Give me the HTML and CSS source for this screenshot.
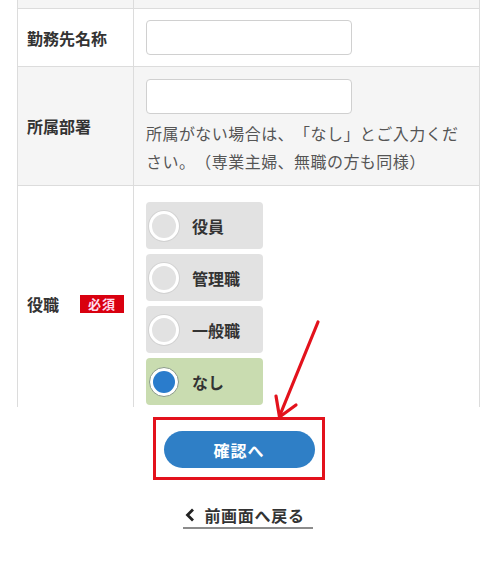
FILE: index.html
```html
<!DOCTYPE html>
<html lang="ja">
<head>
<meta charset="utf-8">
<link rel="stylesheet" href="styles.css">
</head>
<body>
<div class="page">
  <div class="clip">
    <div class="table">
      <div class="row row-top alt">
        <div class="label"></div>
        <div class="value"></div>
      </div>
      <div class="row row-1">
        <div class="label">勤務先名称</div>
        <div class="value"><div class="input"></div></div>
      </div>
      <div class="row row-2 alt">
        <div class="label">所属部署</div>
        <div class="value">
          <div class="input"></div>
          <p class="note">所属がない場合は、「なし」とご入力ください。（専業主婦、無職の方も同様）</p>
        </div>
      </div>
      <div class="row row-3">
        <div class="label">役職<span class="badge">必須</span></div>
        <div class="value options">
          <div class="option"><span class="radio"></span>役員</div>
          <div class="option"><span class="radio"></span>管理職</div>
          <div class="option"><span class="radio"></span>一般職</div>
          <div class="option checked"><span class="radio"><span class="dot"></span></span>なし</div>
        </div>
      </div>
    </div>
  </div>

  <div class="actions">
    <div class="highlight">
      <button class="confirm">確認へ</button>
    </div>
    <a class="back"><span class="chev">
      <svg width="10" height="14" viewBox="0 0 10 14"><path d="M8 1.5 L2.5 7 L8 12.5" fill="none" stroke="#222" stroke-width="2.8" stroke-linejoin="miter"/></svg>
    </span>前画面へ戻る</a>
  </div>

  <svg class="arrow" width="496" height="574" viewBox="0 0 496 574">
    <g fill="none" stroke="#e3121c" stroke-width="3.2" stroke-linecap="round" stroke-linejoin="round">
      <path d="M318 322 L280 415"/>
      <path d="M276 396 L279.5 417 L296 405"/>
    </g>
  </svg>
</div>
</body>
</html>
```
FILE: styles.css
```css
* { box-sizing: border-box; }
html, body { margin: 0; padding: 0; background: #fff; }
body {
  font-family: "Noto Sans CJK JP", "Noto Sans", sans-serif;
  color: #333;
  text-spacing-trim: space-all;
}
.page {
  position: relative;
  width: 496px;
  height: 574px;
  overflow: hidden;
}
.clip {
  height: 407px;
  overflow: hidden;
  padding-left: 17px;
  width: 480px;
}
.table {
  border-left: 1px solid #dcdcdc;
  border-right: 1px solid #dcdcdc;
}
.row {
  display: flex;
  border-bottom: 1px solid #dcdcdc;
}
.row.alt { background: #f5f5f5; }
.label {
  width: 116px;
  flex: none;
  border-right: 1px solid #dcdcdc;
  display: flex;
  align-items: center;
  padding-left: 9px;
  font-size: 16px;
  font-weight: 700;
  color: #333;
}
.value {
  flex: 1;
  padding-left: 12px;
  padding-right: 8px;
}
.row-top { height: 9px; }
.row-1 { height: 58px; }
.row-1 .value { display: flex; align-items: center; }
.input {
  width: 206px;
  height: 35px;
  border: 1px solid #d0d0d0;
  border-radius: 4px;
  background: #fff;
}
.row-2 .value { padding-top: 12px; padding-bottom: 10px; }
.note {
  margin: 5px 0 0;
  font-size: 16px;
  line-height: 28px;
  letter-spacing: 0.45px;
  color: #555;
  text-spacing-trim: space-all;
}
.row-3 { border-bottom: none; }
.badge {
  display: inline-block;
  margin-left: 21px;
  width: 44px;
  height: 18px;
  line-height: 18px;
  background: #d9000f;
  color: #fde;
  font-size: 13px;
  font-weight: 700;
  text-align: center;
  letter-spacing: 1px;
}
.options {
  display: flex;
  flex-direction: column;
  gap: 5px;
  padding-top: 16px;
  padding-bottom: 17px;
}
.option {
  width: 117px;
  height: 47px;
  border-radius: 4px;
  background: #e2e2e2;
  display: flex;
  align-items: center;
  padding-left: 3px;
  gap: 13px;
  font-size: 16px;
  font-weight: 700;
  color: #333;
}
.option.checked { background: #c9dcb0; }
.radio {
  width: 30px;
  height: 30px;
  border-radius: 50%;
  border: 3px solid #fff;
  background: #e2e2e2;
  box-shadow: 0 0 0 1px #d2d2d2;
  display: flex;
  align-items: center;
  justify-content: center;
  flex: none;
}
.checked .radio {
  background: #fff;
  border: 1px solid #8a9a8a;
  box-shadow: none;
}
.dot {
  width: 22px;
  height: 22px;
  border-radius: 50%;
  background: #2a7ccc;
}
.actions {
  display: flex;
  flex-direction: column;
  align-items: center;
  padding-top: 10px;
}
.highlight {
  width: 172px;
  height: 63px;
  margin-right: 18px;
  border: 3px solid #e3121c;
  display: flex;
  align-items: center;
  justify-content: center;
  padding-top: 2px;
}
.confirm {
  width: 151px;
  height: 37px;
  border: none;
  border-radius: 19px;
  background: #2f7fc6;
  color: #fff;
  font-family: "Noto Sans CJK JP", sans-serif;
  font-size: 16px;
  font-weight: 700;
  letter-spacing: 1px;
}
.back {
  margin-top: 24px;
  display: flex;
  align-items: center;
  gap: 9px;
  font-size: 16px;
  font-weight: 700;
  letter-spacing: 0.7px;
  color: #333;
  padding: 0 8px 1px 2px;
  border-bottom: 2px solid #8c8c8c;
  line-height: 22px;
}
.chev { display: flex; align-items: center; }
.arrow {
  position: absolute;
  left: 0;
  top: 0;
  pointer-events: none;
}
```
